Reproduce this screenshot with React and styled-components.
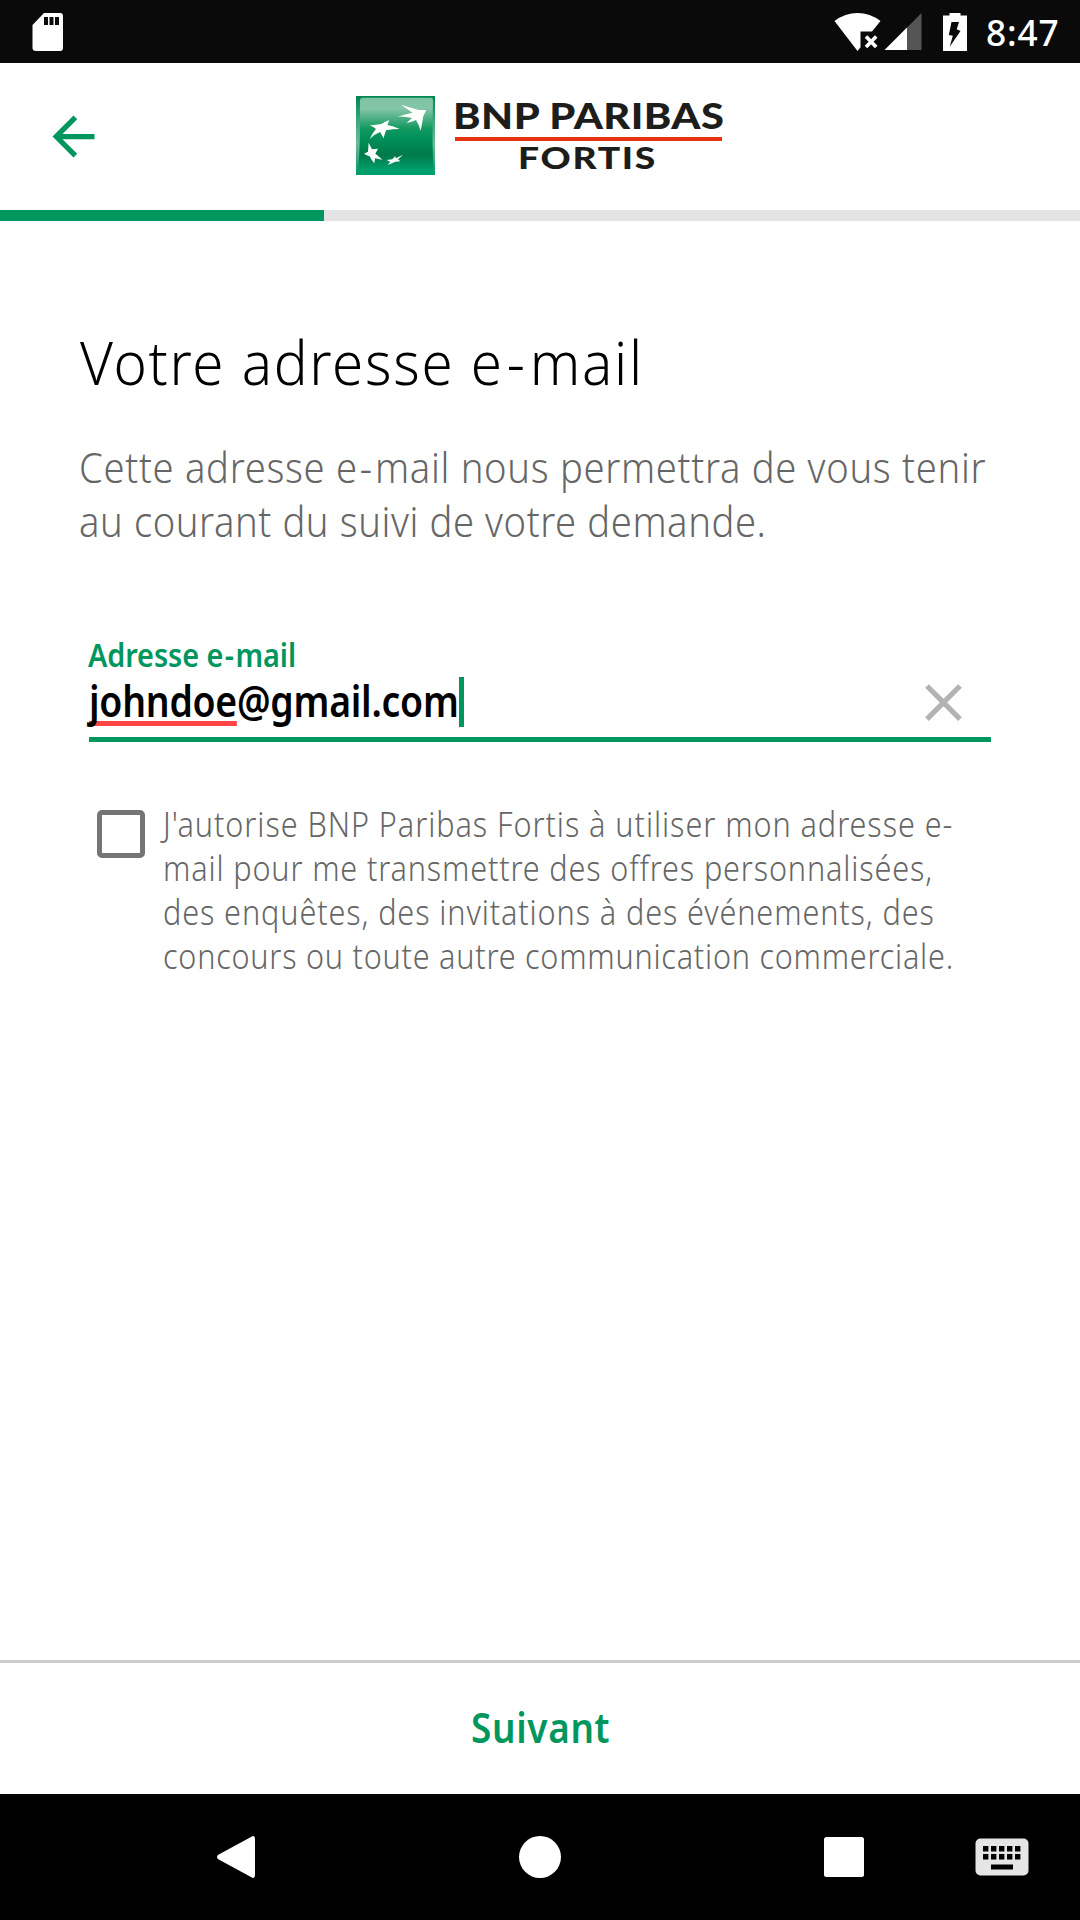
import React, { useLayoutEffect, useRef, useState } from 'react';
import styled, { createGlobalStyle } from 'styled-components';

const GREEN = '#00965e';
const GREY = '#666';

const GlobalStyle = createGlobalStyle`
  * { box-sizing: border-box; }
  body { margin: 0; background: #fff; }
  button { border: 0; padding: 0; background: none; font: inherit; color: inherit; }
  svg { display: block; flex: none; }
`;

const Screen = styled.div`
  width: 1080px;
  height: 1920px;
  display: flex;
  flex-direction: column;
  background: #fff;
  font-family: "Noto Sans", "Open Sans", sans-serif;
  overflow: hidden;
`;

/* Tracked text: letter spacing is derived so the line spans its set width */
const Line = styled.span`
  display: block;
  width: ${(p) => p.$width}px;
  white-space: nowrap;
`;

const Glyphs = styled.span`
  display: block;
  width: max-content;
  transform: scaleX(${(p) => p.$stretch});
  transform-origin: 0 0;
`;

const Hyphen = styled.span`
  padding: 0 0.055em;
`;

function Tracked({ width, stretch = 0.9, children }) {
  const ref = useRef(null);
  const [spacing, setSpacing] = useState(0);
  useLayoutEffect(() => {
    const el = ref.current;
    const length = el.textContent.length;
    setSpacing((width / stretch - el.offsetWidth) / (length - 1));
  }, [width, stretch]);
  return (
    <Line $width={width}>
      <Glyphs ref={ref} $stretch={stretch} style={{ letterSpacing: `${spacing}px` }}>
        {children}
      </Glyphs>
    </Line>
  );
}

const StatusBar = styled.header`
  flex: none;
  height: 63px;
  display: flex;
  align-items: center;
  padding: 0 21px 0 32px;
  background: #0a0a0a;
  color: #fff;
`;

const StatusIcons = styled.div`
  margin-left: auto;
  display: flex;
  align-items: center;
`;

const SignalGroup = styled.div`
  display: flex;
  gap: 2px;
  margin-right: 21px;
`;

const Clock = styled.time`
  margin-left: 19px;
  padding-top: 2px;
  font-size: 36px;
  font-weight: 500;
  line-height: 44px;
`;

const AppBar = styled.div`
  flex: none;
  height: 147px;
  display: grid;
  grid-template-columns: 356px 1fr;
  align-items: start;
`;

const BackButton = styled.button`
  width: 63px;
  height: 63px;
  margin: 42px 0 0 42px;
`;

const Brand = styled.div`
  display: flex;
  gap: 20px;
  padding-top: 33px;
`;

const BrandText = styled.div`
  width: 267px;
  display: flex;
  flex-direction: column;
  color: #1d1d1b;
  font-family: Lato, sans-serif;
  font-weight: 900;
`;

const BrandName = styled.div`
  margin: 1px 0 0 -2px;
  height: 36px;
  font-size: 36.5px;
  line-height: 36px;
`;

const BrandRule = styled.div`
  height: 4.5px;
  margin: 3.5px 0 1px;
  background: #e63312;
`;

const BrandUnit = styled.div`
  margin-left: 63px;
  font-size: 31px;
  line-height: 30px;
`;

const Progress = styled.div`
  flex: none;
  height: 11px;
  background: #e4e4e4;
`;

const ProgressFill = styled.div`
  width: ${(p) => p.$percent}%;
  height: 100%;
  background: ${GREEN};
`;

const Content = styled.main`
  flex: 1;
  padding: 104px 0 0 80px;
`;

const Title = styled.h1`
  margin: 0;
  font-size: 61.5px;
  font-weight: 300;
  line-height: 72px;
  color: #000;
`;

const Intro = styled.p`
  margin: 43px 0 0 -1px;
  font-size: 41.5px;
  font-weight: 300;
  line-height: 54px;
  color: ${GREY};
`;

const Field = styled.div`
  width: 902px;
  margin: 88px 0 0 9px;
  border-bottom: 5px solid ${GREEN};
`;

const FieldLabel = styled.label`
  display: block;
  height: 38px;
  margin-left: -1px;
  font-size: 32px;
  font-weight: 600;
  line-height: 38px;
  color: ${GREEN};
`;

const FieldRow = styled.div`
  display: flex;
  align-items: flex-start;
  height: 63px;
  padding-top: 3px;
`;

const Value = styled.div`
  display: flex;
  font-size: 42.5px;
  font-weight: 600;
  line-height: 48px;
  color: #000;
`;

const Misspelled = styled.span`
  display: inline-block;
  height: 50px;
  background: linear-gradient(#ff4444, #ff4444) 0 44px / 100% 5px no-repeat;
`;

const Caret = styled.span`
  width: 5px;
  height: 50px;
  background: ${GREEN};
`;

const ClearButton = styled.button`
  width: 63px;
  height: 63px;
  margin: -6px 16px 0 auto;
`;

const Consent = styled.div`
  display: flex;
  gap: 18px;
  margin: 60px 0 0 17px;
`;

const Checkbox = styled.span`
  flex: none;
  width: 48px;
  height: 48px;
  margin-top: 8px;
  border: 5.5px solid #757575;
  border-radius: 5px;
`;

const ConsentText = styled.p`
  margin: 0;
  font-size: 34px;
  font-weight: 300;
  line-height: 44px;
  color: ${GREY};
`;

const Footer = styled.footer`
  flex: none;
  height: 134px;
  border-top: 3px solid #ccc;
  display: flex;
`;

const NextButton = styled.button`
  flex: 1;
  display: flex;
  align-items: center;
  justify-content: center;
  padding-bottom: 4px;
  font-size: 41px;
  font-weight: 600;
  line-height: 50px;
  color: ${GREEN};
`;

const NavBar = styled.nav`
  flex: none;
  height: 126px;
  display: grid;
  grid-template-columns: 84px 304px 304px 304px 84px;
  align-items: center;
  justify-items: center;
  background: #000;
`;

const SystemKey = styled.button`
  grid-column: ${(p) => p.$col};
  grid-row: 1;
  width: 54px;
  height: 54px;
`;

const KeyboardKey = styled.button`
  grid-column: 4 / 6;
  grid-row: 1;
  justify-self: end;
  margin-right: 51px;
`;

const SdCard = () => (
  <svg width="32" height="40" viewBox="0 0 32 40">
    <path fill="#fff" d="M12 1H28Q31 1 31 4V36Q31 39 28 39H4Q.5 39 .5 36V13Z" />
    <path fill="#0a0a0a" d="M12 5h4v8h-4zM17.5 5h4v8h-4zM23 5h4v8h-4z" />
  </svg>
);

const Wifi = () => (
  <svg width="48" height="40" viewBox="0 0 48 40">
    <path fill="#fff" d="M.5 9Q11 1 23.5 1T46.5 9L38 19.500H26.500V35.200L23.500 39Z" />
    <path stroke="#fff" strokeWidth="3.6" d="M32 24.500L42.200 35M42.200 24.500L32 35" />
  </svg>
);

const Signal = () => (
  <svg width="38" height="40" viewBox="0 0 38 40">
    <path fill="#555" d="M37.500 1V38H1Z" />
    <path fill="#fff" d="M23 15.500V38H.5Z" />
  </svg>
);

const Battery = () => (
  <svg width="24" height="40" viewBox="0 0 24 40">
    <path fill="#fff" d="M6.500 1H17.500V3.500H24V39H0V3.500H6.500Z" />
    <path fill="#0a0a0a" d="M8.500 10H16L13.700 17.300L17.500 19L6.700 34.700L9.800 23.800L5.800 23Z" />
  </svg>
);

const StarsMark = () => (
  <svg width="79" height="79" viewBox="0 0 237 237">
    <defs>
      <linearGradient id="mark" x1="0" y1="0" x2="0" y2="1">
        <stop offset="0" stopColor="#7dc3a2" />
        <stop offset=".14" stopColor="#84c6a8" />
        <stop offset=".4" stopColor="#12995f" />
        <stop offset=".52" stopColor="#00915a" />
        <stop offset=".74" stopColor="#007a4a" />
        <stop offset=".94" stopColor="#00a06c" />
        <stop offset="1" stopColor="#00a06c" />
      </linearGradient>
      <linearGradient id="edge" x1="0" y1="0" x2="0" y2="1">
        <stop offset="0" stopColor="#00864f" />
        <stop offset=".3" stopColor="#3aa67c" />
        <stop offset=".6" stopColor="#6dbb98" />
        <stop offset="1" stopColor="#009a64" />
      </linearGradient>
    </defs>
    <path fill="url(#edge)" d="M0 0H237V237H0Z" />
    <path fill="url(#mark)" d="M20 5H224Q231 5 231 12Q227 130 233 237H6Q14 130 12 14Q12 5 20 5Z" />
    <g fill="#fff">
      <path d="M135 26Q160 34 188 42L211 42L202 60Q199 80 194 104Q188 84 180 72Q168 78 152 81L168 66Q145 60 124 62Q148 54 170 50Q152 38 135 26Z" />
      <path d="M100 72L94 87Q112 90 131 99Q108 99 90 103Q86 114 83 127Q76 114 72 108Q56 114 41 129Q50 110 60 99Q50 92 42 88Q60 86 76 84Q88 76 100 72Z" />
      <path d="M38 140Q44 152 48 160L66 158L58 173Q68 180 79 191Q66 190 57 187Q56 194 55 202Q46 192 41 181Q32 178 24 173L36 167Q37 154 38 140Z" />
      <path d="M141 176Q132 184 126 190L133 196L118 197Q106 203 94 207L103 198L92 192L109 190L117 181L120 187Q130 181 141 176Z" />
    </g>
  </svg>
);

const BackArrow = () => (
  <svg width="63" height="63" viewBox="0 0 24 24">
    <path fill={GREEN} d="M20 11H7.83l5.59-5.59L12 4l-8 8 8 8 1.41-1.41L7.83 13H20z" />
  </svg>
);

const Cross = () => (
  <svg width="63" height="63" viewBox="0 0 24 24">
    <path
      fill="#b3b3b3"
      d="M19 6.41L17.59 5 12 10.59 6.41 5 5 6.41 10.59 12 5 17.59 6.41 19 12 13.41 17.59 19 19 17.59 13.41 12z"
    />
  </svg>
);

const Keyboard = () => {
  const columns = [8, 16, 24, 32, 40];
  return (
    <svg width="54" height="38" viewBox="0 0 54 38">
      <rect x=".5" y=".5" width="53" height="37" rx="5" fill="#e5e5e5" />
      {columns.map((x) => (
        <path key={x} d={`M${x} 8h5.4v5.5h-5.4zM${x} 16h5.4v5.5h-5.4z`} />
      ))}
      <path d="M16 26.500h22v5h-22z" />
    </svg>
  );
};

export default function App() {
  return (
    <Screen>
      <GlobalStyle />
      <StatusBar>
        <SdCard />
        <StatusIcons>
          <SignalGroup>
            <Wifi />
            <Signal />
          </SignalGroup>
          <Battery />
          <Clock>
            <Tracked width={73} stretch={0.98}>8:47</Tracked>
          </Clock>
        </StatusIcons>
      </StatusBar>

      <AppBar>
        <BackButton aria-label="Retour">
          <BackArrow />
        </BackButton>
        <Brand>
          <StarsMark />
          <BrandText>
            <BrandName>
              <Tracked width={271} stretch={1.14}>BNP PARIBAS</Tracked>
            </BrandName>
            <BrandRule />
            <BrandUnit>
              <Tracked width={137} stretch={1.2}>FORTIS</Tracked>
            </BrandUnit>
          </BrandText>
        </Brand>
      </AppBar>
      <Progress>
        <ProgressFill $percent={30} />
      </Progress>

      <Content>
        <Title>
          <Tracked width={562} stretch={0.92}>
            Votre adresse e<Hyphen>-</Hyphen>mail
          </Tracked>
        </Title>
        <Intro>
          <Tracked width={907} stretch={0.92}>
            Cette adresse e<Hyphen>-</Hyphen>mail nous permettra de vous tenir
          </Tracked>
          <Tracked width={687} stretch={0.92}>au courant du suivi de votre demande.</Tracked>
        </Intro>
        <Field>
          <FieldLabel>
            <Tracked width={208}>
              Adresse e<Hyphen>-</Hyphen>mail
            </Tracked>
          </FieldLabel>
          <FieldRow>
            <Value>
              <Tracked width={370} stretch={0.88}>
                <Misspelled>johndoe</Misspelled>@gmail.com
              </Tracked>
              <Caret />
            </Value>
            <ClearButton aria-label="Effacer">
              <Cross />
            </ClearButton>
          </FieldRow>
        </Field>
        <Consent>
          <Checkbox role="checkbox" aria-checked="false" />
          <ConsentText>
            <Tracked width={789}>J'autorise BNP Paribas Fortis à utiliser mon adresse e-</Tracked>
            <Tracked width={769}>mail pour me transmettre des offres personnalisées,</Tracked>
            <Tracked width={771}>des enquêtes, des invitations à des événements, des</Tracked>
            <Tracked width={790}>concours ou toute autre communication commerciale.</Tracked>
          </ConsentText>
        </Consent>
      </Content>

      <Footer>
        <NextButton>
          <Tracked width={139}>Suivant</Tracked>
        </NextButton>
      </Footer>

      <NavBar>
        <SystemKey $col={2} aria-label="Retour système">
          <svg width="54" height="54" viewBox="0 0 54 54">
            <path fill="#fff" d="M8.800 25Q7 27 8.800 29L42 47Q46 49.500 46 45V9Q46 4.500 42 7Z" />
          </svg>
        </SystemKey>
        <SystemKey $col={3} aria-label="Accueil">
          <svg width="54" height="54" viewBox="0 0 54 54">
            <circle cx="27" cy="27" r="21" fill="#fff" />
          </svg>
        </SystemKey>
        <SystemKey $col={4} aria-label="Applications récentes">
          <svg width="54" height="54" viewBox="0 0 54 54">
            <rect x="7" y="7" width="40" height="40" rx="2.500" fill="#fff" />
          </svg>
        </SystemKey>
        <KeyboardKey aria-label="Clavier">
          <Keyboard />
        </KeyboardKey>
      </NavBar>
    </Screen>
  );
}
